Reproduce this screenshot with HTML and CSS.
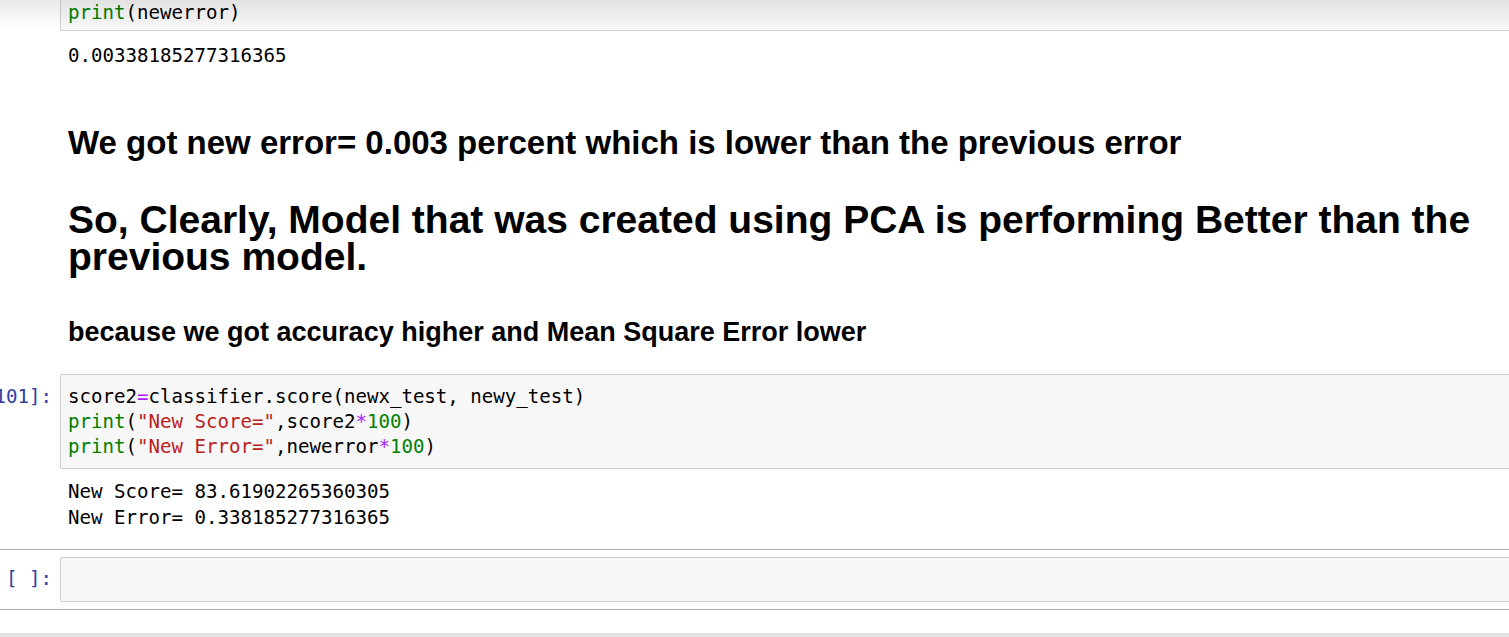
FILE: index.html
```html
<!DOCTYPE html>
<html>
<head>
<meta charset="utf-8">
<link rel="stylesheet" href="styles.css">
</head>
<body>
<div class="notebook">
  <div class="cell first">
    <div class="input">
      <div class="prompt"></div>
      <div class="code-box top-cut"><div class="line"><span class="kw">print</span>(newerror)</div></div>
    </div>
    <div class="output out-first">
      <div class="prompt"></div>
      <div class="out-text"><div class="line">0.00338185277316365</div></div>
    </div>
  </div>

  <div class="cell md">
    <div class="prompt"></div>
    <div class="md-body">
      <h3 class="h3">We got new error= 0.003 percent which is lower than the previous error</h3>
      <h2 class="h2">So, Clearly, Model that was created using PCA is performing Better than the previous model.</h2>
      <h4 class="h4">because we got accuracy higher and Mean Square Error lower</h4>
    </div>
  </div>

  <div class="cell code-cell">
    <div class="input">
      <div class="prompt"><span class="ptext">In&nbsp;[101]:</span></div>
      <div class="code-box">
        <div class="line">score2<span class="op">=</span>classifier.score(newx_test, newy_test)</div>
        <div class="line"><span class="kw">print</span>(<span class="str">"New Score="</span>,score2<span class="op">*</span><span class="num">100</span>)</div>
        <div class="line"><span class="kw">print</span>(<span class="str">"New Error="</span>,newerror<span class="op">*</span><span class="num">100</span>)</div>
      </div>
    </div>
    <div class="output out-second">
      <div class="prompt"></div>
      <div class="out-text">
        <div class="line">New Score= 83.61902265360305</div>
        <div class="line">New Error= 0.338185277316365</div>
      </div>
    </div>
  </div>

  <div class="cell selected">
    <div class="input">
      <div class="prompt"><span class="ptext">In&nbsp;[&nbsp;]:</span></div>
      <div class="code-box empty"></div>
    </div>
  </div>

  <div class="bottom-band"></div>
</div>
<div class="top-shadow"></div>
</body>
</html>
```

FILE: styles.css
```css
html, body {
  margin: 0;
  padding: 0;
  background: #fff;
  height: 637px;
  overflow: hidden;
}
.notebook {
  font-family: "DejaVu Sans Mono", "Liberation Mono", monospace;
  font-size: 19.1px;
  color: #000;
}
.cell {
  display: flex;
  flex-direction: column;
}
.input, .output {
  display: flex;
}
.prompt {
  width: 60px;
  flex: 0 0 60px;
  display: flex;
  justify-content: flex-end;
  align-items: flex-start;
  padding-right: 8px;
  box-sizing: border-box;
  white-space: nowrap;
  color: #303F9F;
  line-height: 25px;
}
.code-cell .input .prompt { padding-top: 10px; }
.selected .input .prompt { padding-top: 9px; }
.code-box {
  flex: 1;
  background: #f7f7f7;
  border: 1px solid #cfcfcf;
  border-right: none;
  border-radius: 2px 0 0 2px;
  padding: 9px 7px 9px 7px;
}
.code-box.top-cut {
  border-top: none;
  padding-top: 0;
  padding-bottom: 5px;
  border-radius: 0 0 0 2px;
}
.code-box.empty {
  height: 25px;
  padding: 9px 7px;
}
.line {
  line-height: 25px;
  height: 25px;
  white-space: pre;
}
.out-text {
  flex: 1;
  padding-left: 8px;
}
.out-first { margin-top: 12px; }
.out-second { margin-top: 10px; }
.out-second .line { line-height: 26px; height: 26px; }
.kw { color: #008000; }
.str { color: #BA2121; }
.op { color: #AA22FF; }
.num { color: #008000; }

.md {
  flex-direction: row;
}
.md-body {
  flex: 1;
  padding-left: 8px;
  font-family: "Liberation Sans", Arial, sans-serif;
  font-weight: bold;
  color: #000;
}
.h3 {
  font-size: 33px;
  line-height: 33px;
  margin: 58px 0 0 0;
  font-weight: bold;
}
.h2 {
  font-size: 39px;
  line-height: 37px;
  margin: 42px 0 0 0;
  font-weight: bold;
}
.h4 {
  font-size: 27px;
  line-height: 27px;
  margin: 44px 0 0 0;
  font-weight: bold;
}
.code-cell { margin-top: 28px; }
.selected {
  margin-top: 18px;
  border-top: 1px solid #ababab;
  border-bottom: 1px solid #ababab;
  padding: 7px 0 7px 0;
}
.bottom-band {
  margin-top: 23px;
  height: 10px;
  background: #e2e2e2;
}
.top-shadow {
  position: absolute;
  left: 0;
  top: 0;
  width: 100%;
  height: 28px;
  background: linear-gradient(to bottom, rgba(0,0,0,0.085), rgba(0,0,0,0));
  pointer-events: none;
}
```
